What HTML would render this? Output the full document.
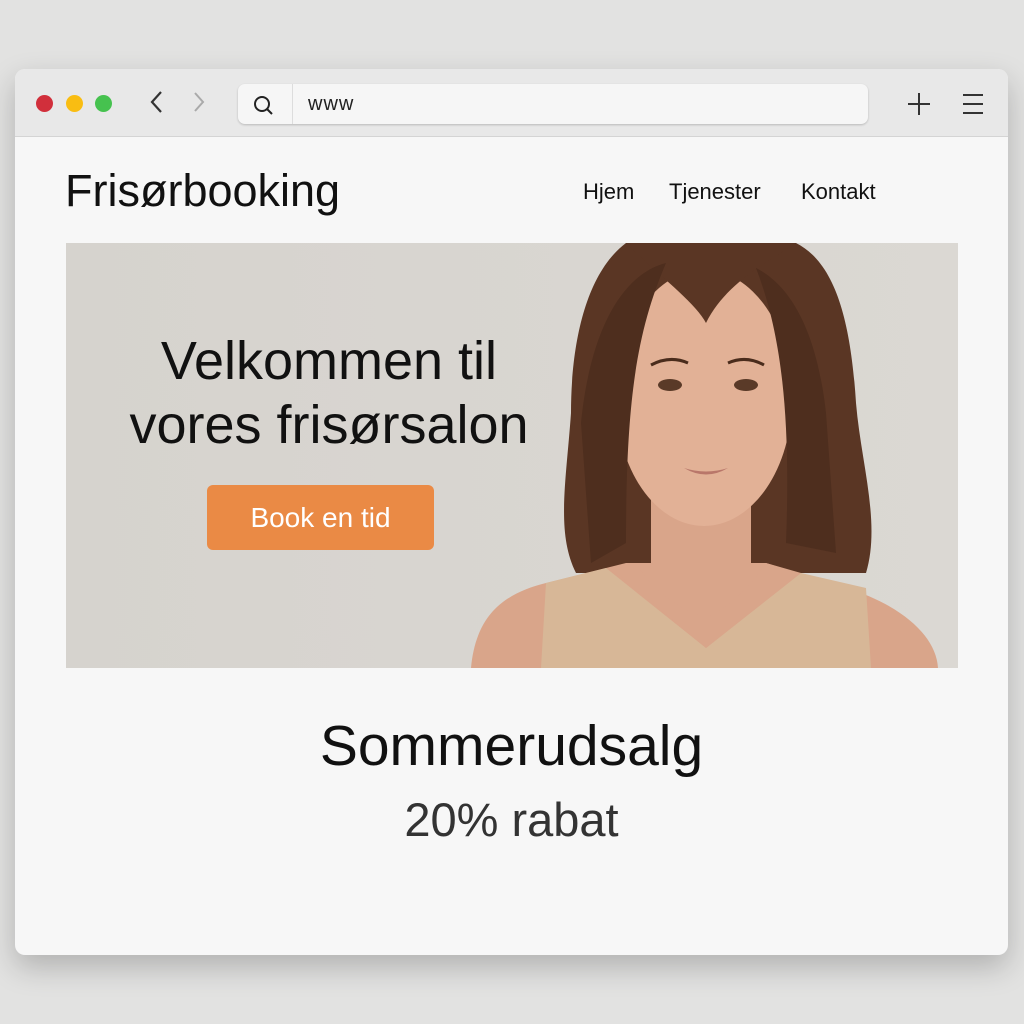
<!DOCTYPE html>
<html><head><meta charset="utf-8"><style>
body{margin:0;width:1024px;height:1024px;background:#e2e2e1;font-family:"Liberation Sans",sans-serif;position:relative;overflow:hidden}
.win{position:absolute;left:15px;top:69px;width:993px;height:886px;background:#f7f7f7;border-radius:10px;overflow:hidden;box-shadow:0 12px 30px rgba(0,0,0,.22)}
.tb{position:absolute;left:0;top:0;width:100%;height:67px;background:#e8e8e8;border-bottom:1px solid #d4d4d4}
.dot{position:absolute;top:26px;width:17px;height:17px;border-radius:50%}
.url{position:absolute;left:223px;top:15px;width:630px;height:40px;background:#f6f6f6;border-radius:7px;box-shadow:0 1px 2px rgba(0,0,0,.2)}
.abs{position:absolute}
</style></head><body>
<div class="win">
 <div class="tb">
  <div class="dot" style="left:21px;background:#d12f3b"></div>
  <div class="dot" style="left:51px;background:#f9bd12"></div>
  <div class="dot" style="left:80px;background:#46c24f"></div>
  <svg class="abs" style="left:130px;top:20px" width="80" height="28"><path d="M16 3 L7 13 L16 23" stroke="#333" stroke-width="2.2" fill="none"/><path d="M50 4 L58 13 L50 22" stroke="#aaa" stroke-width="2" fill="none"/></svg>
  <div class="url">
   <svg class="abs" style="left:14px;top:10px" width="24" height="24"><circle cx="10" cy="10" r="7" stroke="#222" stroke-width="2" fill="none"/><path d="M15 15 L20 20" stroke="#222" stroke-width="2"/></svg>
   <div class="abs" style="left:54px;top:0;width:1px;height:40px;background:#ddd"></div>
   <div class="abs" style="left:70px;top:9px;font-size:20px;color:#222;letter-spacing:1px">www</div>
  </div>
  <svg class="abs" style="left:890px;top:22px" width="90" height="26"><path d="M14 2 V24 M3 13 H25" stroke="#333" stroke-width="2"/><path d="M58 4 H78 M58 13 H78 M58 22 H78" stroke="#333" stroke-width="2"/></svg>
 </div>
 <div class="abs" style="left:50px;top:96px;font-size:45px;color:#111">Frisørbooking</div>
 <div class="abs" style="left:568px;top:110px;font-size:22px;color:#111">Hjem</div>
 <div class="abs" style="left:654px;top:110px;font-size:22px;color:#111">Tjenester</div>
 <div class="abs" style="left:786px;top:110px;font-size:22px;color:#111">Kontakt</div>
 <div class="abs" style="left:51px;top:174px;width:892px;height:425px;background:linear-gradient(90deg,#d6d3ce,#dbd8d3);overflow:hidden">
  <svg class="abs" style="left:0;top:0" width="892" height="425">
   <path d="M560 0 C520 30 505 100 505 170 C500 240 490 290 510 330 L800 330 C815 280 795 220 790 160 C785 80 770 20 730 0 Z" fill="#5a3624"/>
   <path d="M405 425 C410 370 440 350 480 340 L560 320 L700 320 L780 345 C830 360 870 390 872 425 Z" fill="#d9a58a"/>
   <path d="M475 425 L480 340 L540 325 L640 405 L735 330 L800 345 L805 425 Z" fill="#d7b797"/>
   <path d="M545 325 L640 405 L735 330 L700 320 C680 350 660 365 640 375 C610 365 585 345 570 320 Z" fill="#d9a58a"/>
   <rect x="585" y="220" width="100" height="110" fill="#d9a58a"/>
   <ellipse cx="638" cy="155" rx="88" ry="128" fill="#e2b196"/>
   <path d="M560 0 C590 30 630 60 640 80 C660 40 700 20 730 0 Z" fill="#5a3624"/>
   <path d="M515 180 C525 80 560 30 600 20 C570 90 560 160 560 300 L525 320 Z" fill="#4e2e1e"/>
   <path d="M760 170 C750 80 720 40 690 25 C715 90 725 170 720 300 L770 310 Z" fill="#4e2e1e"/>
   <ellipse cx="604" cy="142" rx="12" ry="6" fill="#5a3a28"/><ellipse cx="680" cy="142" rx="12" ry="6" fill="#5a3a28"/>
   <path d="M585 122 Q604 112 622 120 M662 120 Q680 112 698 122" stroke="#4a2c1c" stroke-width="3" fill="none"/>
   <path d="M618 225 Q640 232 662 225 Q640 238 618 225" fill="#b9776a"/>
  </svg>
  <div class="abs" style="left:33px;top:86px;width:460px;text-align:center;font-size:54px;line-height:64px;color:#111">Velkommen til<br>vores frisørsalon</div>
  <div class="abs" style="left:141px;top:242px;width:227px;height:65px;background:#ea8a45;border-radius:6px;color:#fff;font-size:28px;line-height:65px;text-align:center">Book en tid</div>
 </div>
 <div class="abs" style="left:0;top:644px;width:993px;text-align:center;font-size:57px;color:#111">Sommerudsalg</div>
 <div class="abs" style="left:0;top:723px;width:993px;text-align:center;font-size:47px;color:#333">20% rabat</div>
</div>
</body></html>
